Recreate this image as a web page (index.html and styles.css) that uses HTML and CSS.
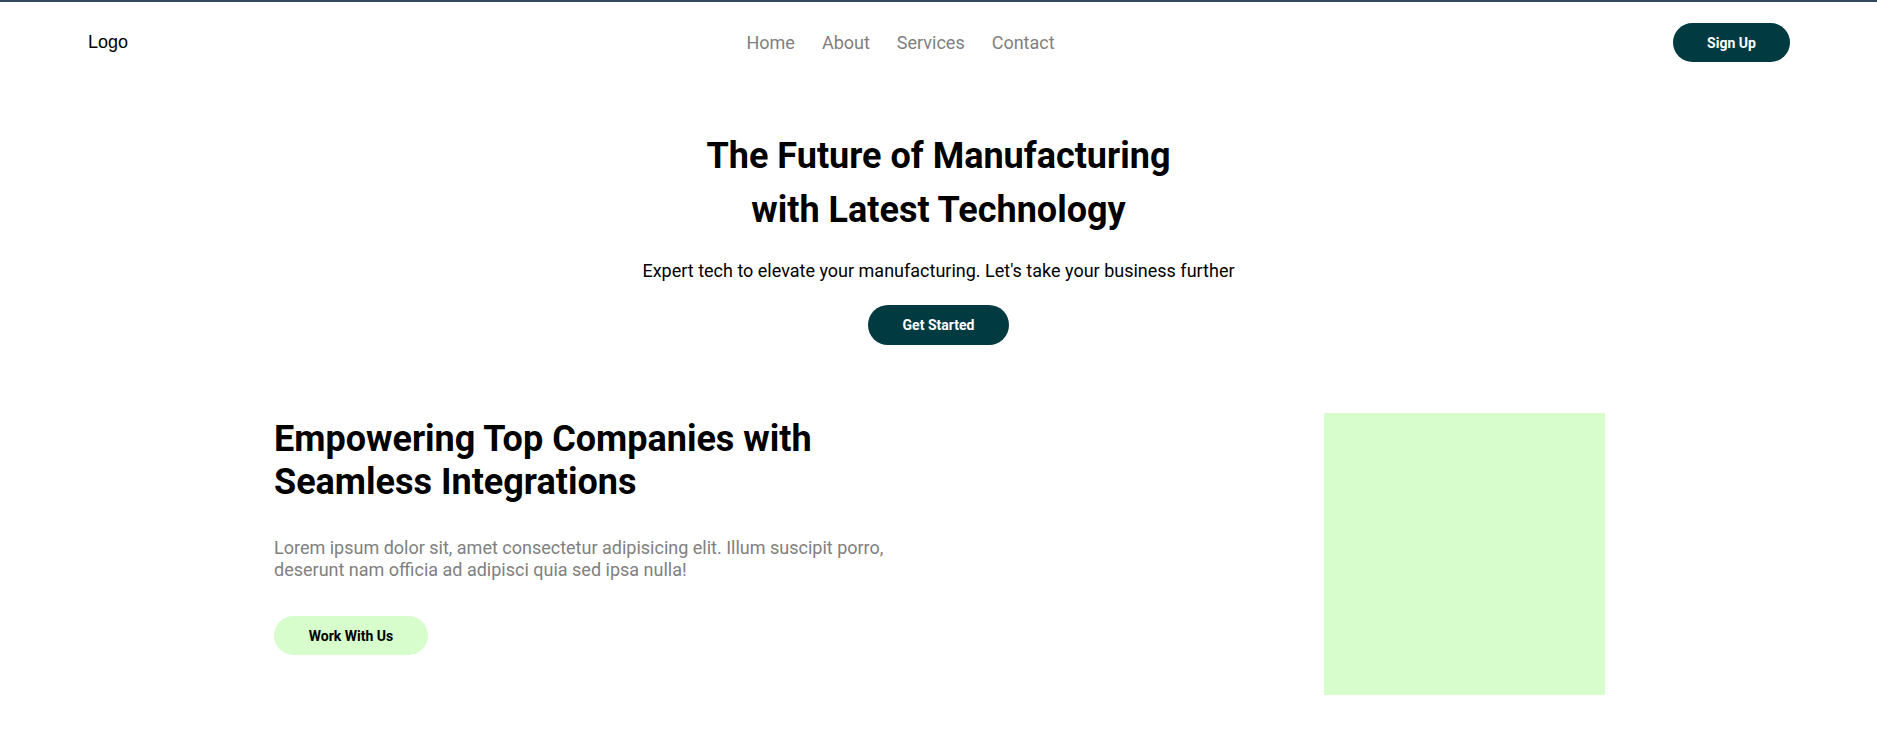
FILE: index.html
```html
<!DOCTYPE html>
<html lang="en">
<head>
<meta charset="UTF-8">
<title>Manufacturing</title>
<link rel="stylesheet" href="styles.css">
</head>
<body>
  <header class="topbar">
    <div class="logo">Logo</div>
    <nav class="menu">
      <a href="#">Home</a>
      <a href="#">About</a>
      <a href="#">Services</a>
      <a href="#">Contact</a>
    </nav>
    <button class="btn btn-dark btn-signup">Sign Up</button>
  </header>

  <section class="hero">
    <h1>The Future of Manufacturing<br>with Latest Technology</h1>
    <p>Expert tech to elevate your manufacturing. Let's take your business further</p>
    <button class="btn btn-dark btn-start">Get Started</button>
  </section>

  <section class="feature">
    <div class="feature-text">
      <h2>Empowering Top Companies with Seamless Integrations</h2>
      <p>Lorem ipsum dolor sit, amet consectetur adipisicing elit. Illum suscipit porro, deserunt nam officia ad adipisci quia sed ipsa nulla!</p>
      <button class="btn btn-light">Work With Us</button>
    </div>
    <div class="feature-box"></div>
  </section>
</body>
</html>
```

FILE: styles.css
```css
* { box-sizing: border-box; }

body {
  margin: 0;
  border-top: 2px solid #34495e;
  font-family: Roboto, "Noto Sans", sans-serif;
  color: #000;
  background: #fff;
}

.topbar {
  display: flex;
  justify-content: space-between;
  align-items: center;
  padding: 21px 87px 0 88px;
}

.logo {
  font-family: "Liberation Sans", Arial, sans-serif;
  font-size: 18px;
  color: #000;
}

.menu {
  display: flex;
  gap: 27px;
}

.menu a {
  font-size: 18px;
  color: #7f7f7f;
  text-decoration: none;
}

.btn {
  border: none;
  border-radius: 20px;
  font-family: Roboto, sans-serif;
  font-weight: 700;
  font-size: 14px;
  cursor: pointer;
  display: inline-flex;
  align-items: center;
  justify-content: center;
  padding: 0;
}

.btn-dark {
  background: #023a42;
  color: #fff;
}

.btn-signup {
  width: 117px;
  height: 39px;
}

.hero {
  text-align: center;
  padding-top: 67px;
}

.hero h1 {
  margin: 0;
  font-size: 36px;
  line-height: 54px;
  font-weight: 700;
}

.hero p {
  margin: 20px 0 21px;
  font-size: 18px;
  line-height: 27px;
}

.btn-start {
  width: 141px;
  height: 40px;
}

.feature {
  display: flex;
  justify-content: space-between;
  align-items: flex-start;
  padding: 0 272px 0 274px;
  margin-top: 68px;
}

.feature-text {
  width: 640px;
}

.feature-text h2 {
  margin: 5px 0 33px;
  font-size: 36px;
  line-height: 43px;
  font-weight: 700;
  max-width: 560px;
}

.feature-text p {
  margin: 0 0 35px;
  font-size: 18px;
  line-height: 22px;
  color: #808080;
}

.btn-light {
  background: #d6fdcb;
  color: #000;
  width: 154px;
  height: 39px;
}

.feature-box {
  width: 281px;
  height: 282px;
  background: #d6fdcb;
}
```
